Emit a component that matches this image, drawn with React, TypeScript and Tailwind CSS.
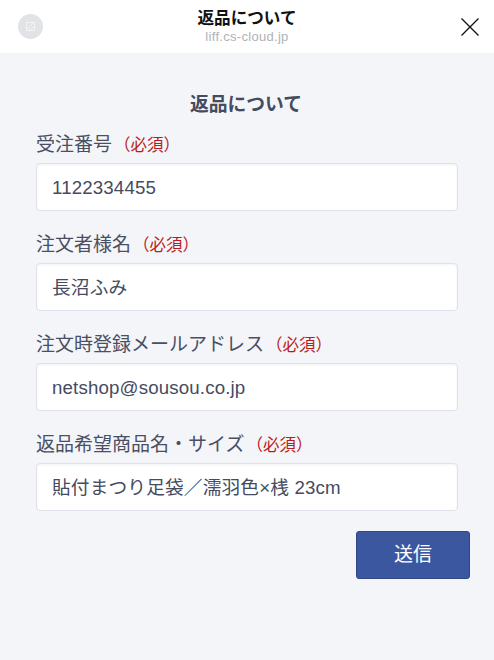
import React from 'react';

const fields = [
  { label: '受注番号', value: '1122334455' },
  { label: '注文者様名', value: '長沼ふみ' },
  { label: '注文時登録メールアドレス', value: 'netshop@sousou.co.jp' },
  { label: '返品希望商品名・サイズ', value: '貼付まつり足袋／濡羽色×桟 23cm' },
];

const App: React.FC = () => {
  return (
    <div className="w-[494px] h-[660px] flex flex-col bg-[#f4f5f9] overflow-hidden font-['Liberation_Sans','Noto_Sans_CJK_JP',sans-serif]">
      <header className="h-[53px] shrink-0 bg-white grid grid-cols-[1fr_auto_1fr] items-center pl-[18px] pr-[14px]">
        <div className="w-[25px] h-[25px] rounded-full bg-[#e2e3e7] flex items-center justify-center">
          <svg width="9" height="9" viewBox="0 0 9 9" fill="none" stroke="#f4f4f6" strokeWidth="0.9">
            <rect x="0.5" y="0.5" width="8" height="8" />
            <path d="M0.5 7.5L7.5 0.5M3 8.5L8.5 4" />
          </svg>
        </div>
        <div className="flex flex-col items-center -translate-x-[2px]">
          <div className="text-[16.6px] leading-[20px] font-bold text-[#111111]">返品について</div>
          <div className="text-[13px] leading-[15px] tracking-[0.3px] text-[#b0b2b6]">liff.cs-cloud.jp</div>
        </div>
        <svg className="justify-self-end" width="20" height="20" viewBox="0 0 20 20" fill="none" stroke="#111111" strokeWidth="1.3">
          <path d="M1.5 1.5L18.5 18.5M18.5 1.5L1.5 18.5" />
        </svg>
      </header>

      <main className="flex-1 flex flex-col px-[36px] pt-[40px]">
        <h1 className="text-[18.8px] leading-[24px] font-bold text-[#454b60] text-center -translate-x-[1px]">返品について</h1>
        <div className="mt-[14px] flex flex-col gap-[20px]">
          {fields.map((field) => (
            <div key={field.label}>
              <div className="text-[19px] leading-[28px] text-[#4a4f63] mb-[4px]">
                {field.label}
                <span className="ml-[2px] text-[16.5px] text-[#b91c1c]">（必須）</span>
              </div>
              <div className="h-[48px] bg-white border border-[#dfe0ea] rounded-[4px] shadow-[inset_0_1px_2px_rgba(80,85,120,0.08)] flex items-center pt-[2px] px-[15px] text-[18.7px] tracking-[0.15px] text-[#454b60] whitespace-nowrap">
                {field.value}
              </div>
            </div>
          ))}
        </div>
        <div className="mt-[20px] flex justify-end -mr-[12px]">
          <button className="w-[114px] h-[48px] pt-[1px] bg-[#3b57a0] border border-[#2f4785] rounded-[3px] text-white text-[19px]">
            送信
          </button>
        </div>
      </main>
    </div>
  );
};

export default App;
